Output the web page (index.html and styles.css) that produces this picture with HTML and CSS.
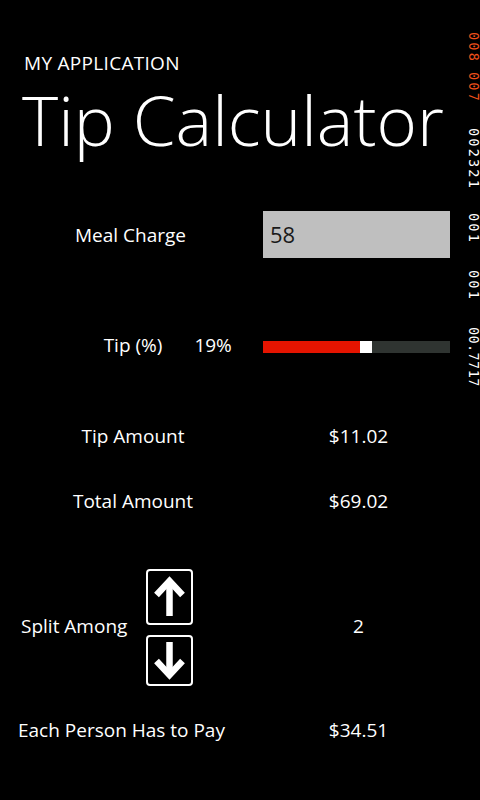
FILE: index.html
```html
<!DOCTYPE html>
<html>
<head>
<meta charset="utf-8">
<link rel="stylesheet" href="styles.css">
</head>
<body>
<div class="page">
  <header class="header">
    <div class="app-name">MY APPLICATION</div>
    <h1 class="title">Tip Calculator</h1>
  </header>
  <main class="form">
    <div class="row row-meal">
      <div class="label-cell meal-label">Meal Charge</div>
      <div class="value-cell"><div class="textbox">58</div></div>
    </div>
    <div class="row row-tip">
      <div class="label-cell tip-cell">
        <span class="tip-label">Tip (%)</span>
        <span class="tip-value">19%</span>
      </div>
      <div class="value-cell">
        <div class="slider">
          <div class="slider-fill" style="width: 97px"></div>
          <div class="slider-thumb"></div>
          <div class="slider-rest"></div>
        </div>
      </div>
    </div>
    <div class="row row-amount">
      <div class="label-cell">Tip Amount</div>
      <div class="value-cell value-text">$11.02</div>
    </div>
    <div class="row row-total">
      <div class="label-cell">Total Amount</div>
      <div class="value-cell value-text">$69.02</div>
    </div>
    <div class="row row-split">
      <div class="label-cell split-cell">
        <span class="split-label">Split Among</span>
        <div class="buttons">
          <button class="arrow-btn" aria-label="up">
            <svg width="47" height="56" viewBox="0 0 47 56">
              <rect x="1" y="1" width="45" height="54" rx="3" fill="#000" stroke="#fff" stroke-width="2"/>
              <line x1="23.5" y1="11" x2="23.5" y2="47" stroke="#fff" stroke-width="6.5"/>
              <polyline points="10.5,26 23.5,12 36.5,26" fill="none" stroke="#fff" stroke-width="6.5" stroke-linecap="butt" stroke-linejoin="miter"/>
            </svg>
          </button>
          <button class="arrow-btn" aria-label="down">
            <svg width="47" height="51" viewBox="0 0 47 51">
              <rect x="1" y="1" width="45" height="49" rx="3" fill="#000" stroke="#fff" stroke-width="2"/>
              <line x1="23.5" y1="7" x2="23.5" y2="40" stroke="#fff" stroke-width="6.5"/>
              <polyline points="10.5,26 23.5,40 36.5,26" fill="none" stroke="#fff" stroke-width="6.5" stroke-linecap="butt" stroke-linejoin="miter"/>
            </svg>
          </button>
        </div>
      </div>
      <div class="value-cell value-text split-value">2</div>
    </div>
    <div class="row row-each">
      <div class="label-cell each-cell">Each Person Has to Pay</div>
      <div class="value-cell value-text">$34.51</div>
    </div>
  </main>
  <div class="counters">
    <div class="slot s1"><span class="cnt orange">008</span></div>
    <div class="slot s2"><span class="cnt orange">007</span></div>
    <div class="slot s3"><span class="cnt">002321</span></div>
    <div class="slot s4"><span class="cnt">001</span></div>
    <div class="slot s5"><span class="cnt">001</span></div>
    <div class="slot s6"><span class="cnt tight">00.7717</span></div>
  </div>
</div>
</body>
</html>
```

FILE: styles.css
```css
html, body {
  margin: 0;
  padding: 0;
  background: #000;
}
.page {
  position: relative;
  width: 480px;
  height: 800px;
  overflow: hidden;
  background: #000;
  color: #fff;
  font-family: "Open Sans", "Noto Sans", sans-serif;
}
.header {
  padding: 52px 0 0 24px;
}
.app-name {
  font-size: 19px;
  line-height: 22px;
  letter-spacing: 0.3px;
}
.title {
  margin: 2px 0 0 -2px;
  font-size: 69px;
  font-weight: 300;
  line-height: 86px;
  white-space: nowrap;
}
.form {
  display: flex;
  flex-direction: column;
  padding-left: 12px;
}
.row {
  display: grid;
  grid-template-columns: 242px 187px;
  column-gap: 9px;
  align-items: center;
  font-size: 19px;
}
.label-cell {
  text-align: center;
}
.value-cell {
  text-align: center;
}
.value-text {
  padding-left: 4px;
}
.meal-label {
  margin-left: -5px;
}
.row-meal {
  margin-top: 49px;
  height: 47px;
}
.textbox {
  height: 47px;
  background: #bfbfbf;
  color: #1a1a1a;
  font-size: 22px;
  line-height: 47px;
  text-align: left;
  padding-left: 7px;
}
.row-tip {
  margin-top: 72px;
  height: 30px;
}
.tip-cell {
  display: grid;
  grid-template-columns: 1fr auto 1fr;
  align-items: center;
}
.tip-label {
  grid-column: 2;
}
.tip-value {
  grid-column: 3;
  justify-self: start;
  margin-left: 32px;
}
.slider {
  display: flex;
  height: 12px;
  margin-top: 4px;
}
.slider-fill {
  background: #e51400;
}
.slider-thumb {
  width: 12px;
  background: #fff;
}
.slider-rest {
  flex: 1;
  background: #2f3431;
}
.row-amount {
  margin-top: 61px;
  height: 30px;
}
.row-total {
  margin-top: 35px;
  height: 30px;
}
.row-split {
  margin-top: 53px;
  height: 117px;
}
.split-cell {
  display: flex;
  align-items: center;
  text-align: left;
  margin-left: 9px;
}
.split-label {
  width: 125px;
  margin-top: -4px;
}
.split-value {
  margin-top: -4px;
}
.buttons {
  display: flex;
  flex-direction: column;
  gap: 10px;
}
.arrow-btn {
  display: block;
  padding: 0;
  margin: 0;
  border: 0;
  background: none;
  line-height: 0;
}
.row-each {
  margin-top: 29px;
  height: 30px;
}
.each-cell {
  text-align: left;
  margin-left: 6px;
  white-space: nowrap;
}
.counters {
  position: absolute;
  top: 0;
  left: 467px;
  width: 13px;
  display: flex;
  flex-direction: column;
}
.slot {
  flex: none;
  width: 13px;
}
.cnt {
  display: block;
  width: 80px;
  height: 13px;
  white-space: nowrap;
  font-family: "DejaVu Sans Mono", monospace;
  font-size: 13.5px;
  line-height: 13px;
  letter-spacing: 2.2px;
  color: #fff;
  transform-origin: 0 0;
  transform: translateX(13px) rotate(90deg);
}
.cnt.tight {
  letter-spacing: 0.4px;
}
.cnt.orange {
  color: #f0501a;
}
.s1 { margin-top: 32px; height: 31px; }
.s2 { margin-top: 9px; height: 28px; }
.s3 { margin-top: 28px; height: 67px; }
.s4 { margin-top: 18px; height: 29px; }
.s5 { margin-top: 28px; height: 28px; }
.s6 { margin-top: 29px; height: 55px; }
```
